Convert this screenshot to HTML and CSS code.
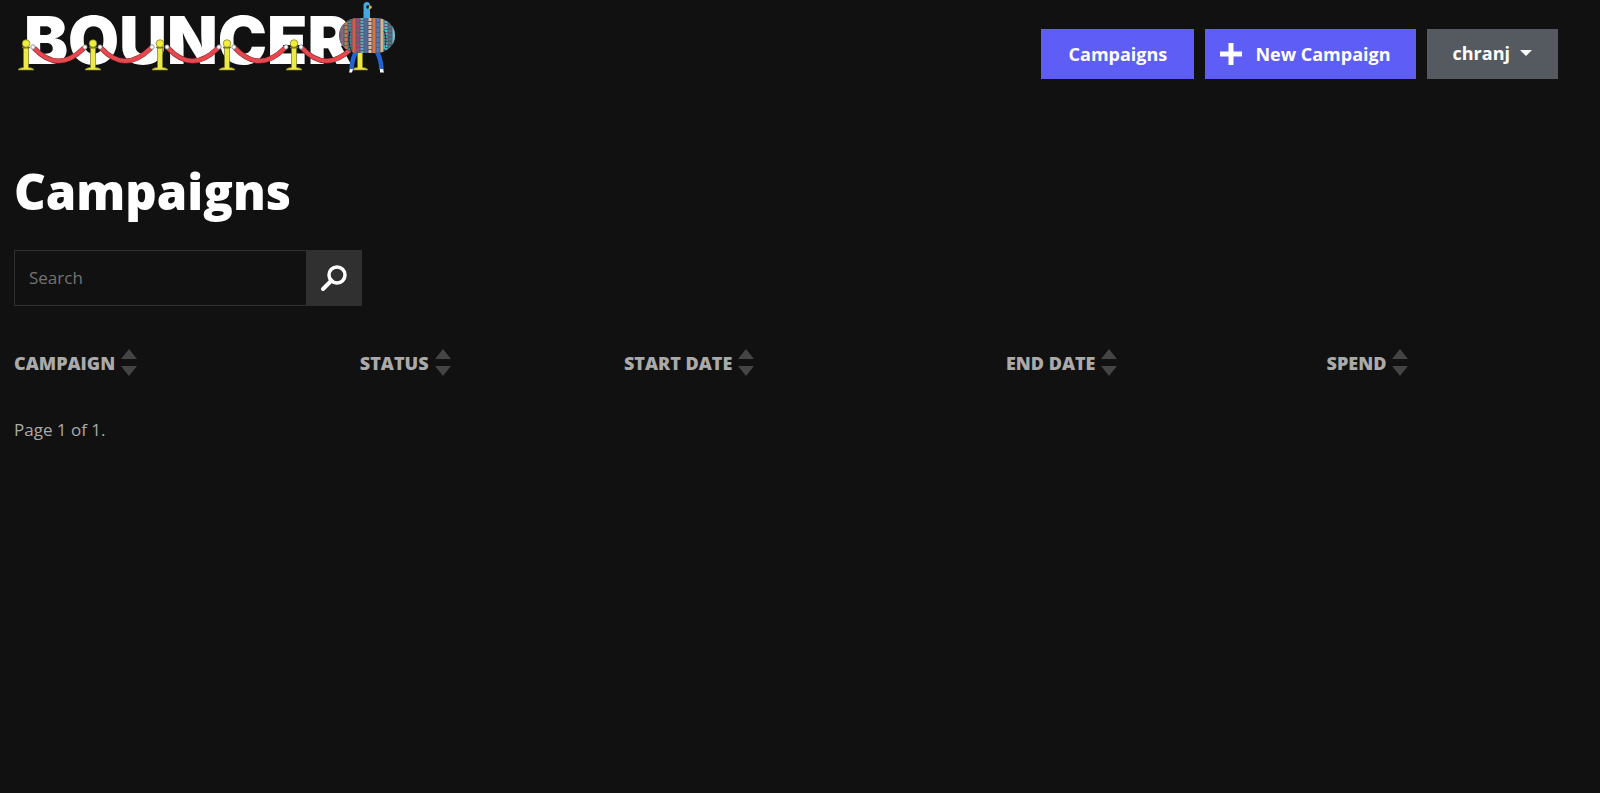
FILE: index.html
```html
<!DOCTYPE html>
<html lang="en">
<head>
<meta charset="utf-8">
<title>Bouncer – Campaigns</title>
<link rel="stylesheet" href="styles.css">
</head>
<body>
<svg class="defs" aria-hidden="true">
  <defs>
    <symbol id="sort" viewBox="0 0 16 28">
      <path d="M8 0 16 10H0ZM0 17H16L8 27Z" fill="currentColor"/>
    </symbol>
    <g id="post">
      <path d="M-8 70Q-8 68-2.500 67.500V48H2.500V67.500Q8 68 8 70Z" fill="#eeea45" stroke="#77752a" stroke-width=".7"/>
      <path d="M-4 47.500H4" stroke="#77752a" stroke-width="1.500"/>
      <circle cy="43.500" r="3.800" fill="#f1ed3c" stroke="#77752a" stroke-width=".7"/>
    </g>
    <g id="rope">
      <path d="M8 48Q32 74 58 48" fill="none" stroke="#7d2b30" stroke-width="5"/>
      <path d="M8 48Q32 74 58 48" fill="none" stroke="#e8474d" stroke-width="4"/>
      <circle cx="7" cy="47" r="2.200" fill="#fff" stroke="#666" stroke-width=".7"/>
      <circle cx="59" cy="47" r="2.200" fill="#fff" stroke="#666" stroke-width=".7"/>
    </g>
    <clipPath id="body"><rect x="339" y="18" width="56" height="35" rx="19" ry="17"/></clipPath>
  </defs>
</svg>
<header class="topbar">
  <a class="logo" href="#" aria-label="Bouncer">
    <svg width="400" height="80" viewBox="0 0 400 80">
      <text class="wordmark" x="24" y="64">BOUNCER</text>
      <use href="#rope" x="26"/><use href="#rope" x="93"/><use href="#rope" x="160"/><use href="#rope" x="227"/><use href="#rope" x="294"/>
      <use href="#post" x="26"/><use href="#post" x="93"/><use href="#post" x="160"/><use href="#post" x="227"/><use href="#post" x="294"/><use href="#post" x="360"/>
      <path d="M357 50Q352 58 351.500 70M376 50Q381 58 381.500 70" fill="none" stroke="#2164d8" stroke-width="4.500"/>
      <path d="M349 72.500 350 69H353L352 72.500ZM380 69H383L384 72.500H380Z" fill="#fff"/>
      <path d="M363.500 20V5Q364 2 367 2Q370 2 370 6V20Z" fill="#45a9dc"/>
      <circle cx="368" cy="7" r="1.800" fill="#111"/>
      <path d="M369 5.500Q372 5 372 7.500 371 9.500 368.500 9Z" fill="#c9b34c"/>
      <g clip-path="url(#body)">
        <path fill="#5c5a68" d="M339 18H395V53H339Z"/>
        <g fill="none" stroke-width="3">
          <path d="M342 18V53" stroke="#806a83"/><path d="M346 18V53" stroke="#c47c46" stroke-dasharray="3 1"/>
          <path d="M350 18V53" stroke="#3e8d99" stroke-dasharray="2 1"/><path d="M354 18V53" stroke="#d75a45"/>
          <path d="M358 18V53" stroke="#a34874" stroke-dasharray="4 1"/><path d="M362 18V53" stroke="#5ba9c9" stroke-dasharray="2 1"/>
          <path d="M366 18V53" stroke="#496ba0"/><path d="M370 18V53" stroke="#d8bda2" stroke-dasharray="3 1"/>
          <path d="M374 18V53" stroke="#df7338"/><path d="M378 18V53" stroke="#5579b8" stroke-dasharray="4 1"/>
          <path d="M382 18V53" stroke="#d8b68a"/><path d="M386 18V53" stroke="#51bfd1" stroke-dasharray="2 1"/>
          <path d="M390 18V53" stroke="#36829b" stroke-dasharray="2 2"/><path d="M394 18V53" stroke="#70bdcf"/>
        </g>
        <path d="M350 31Q347 41 352 53M384 31Q388 39 384 51" fill="none" stroke="#182736" stroke-width="1"/>
      </g>
      <path d="M385 45Q383 50 387 49" fill="none" stroke="#48b4bf" stroke-width="1.500"/>
    </svg>
  </a>
  <nav class="actions">
    <a class="button primary list" href="#">Campaigns</a>
    <a class="button primary create" href="#"><svg class="plus" width="22" height="22" viewBox="0 0 22 22" aria-hidden="true"><path d="M11 0V22M0 11H22" stroke="currentColor" stroke-width="5"/></svg>New Campaign</a>
    <button class="button account" type="button">chranj<svg class="caret" width="12" height="6" viewBox="0 0 12 6" aria-hidden="true"><path d="M0 0H12L6 6Z" fill="currentColor"/></svg></button>
  </nav>
</header>
<main>
  <h1>Campaigns</h1>
  <form class="search" role="search">
    <input type="search" placeholder="Search" aria-label="Search campaigns">
    <button type="submit" aria-label="Search"><svg width="28" height="28" viewBox="0 0 28 28" aria-hidden="true"><circle cx="17" cy="11" r="8" fill="none" stroke="currentColor" stroke-width="3.500"/><path d="M11.500 16.500 3 25" stroke="currentColor" stroke-width="4" stroke-linecap="round"/></svg></button>
  </form>
  <table>
    <thead>
      <tr>
        <th class="name" scope="col"><a href="#">CAMPAIGN<svg><use href="#sort"/></svg></a></th>
        <th class="status" scope="col"><a href="#">STATUS<svg><use href="#sort"/></svg></a></th>
        <th class="start" scope="col"><a href="#">START DATE<svg><use href="#sort"/></svg></a></th>
        <th class="end" scope="col"><a href="#">END DATE<svg><use href="#sort"/></svg></a></th>
        <th scope="col"><a href="#">SPEND<svg><use href="#sort"/></svg></a></th>
      </tr>
    </thead>
  </table>
  <p class="pages">Page 1 of 1.</p>
</main>
</body>
</html>
```
FILE: styles.css
```css
* { box-sizing: border-box; }
body {
  margin: 0;
  background: #111;
  color: #aaa;
  font: 17px/26px "Open Sans", "Noto Sans", sans-serif;
}
a { color: inherit; text-decoration: none; }
.defs { position: absolute; width: 0; height: 0; }
.topbar {
  display: flex;
  justify-content: space-between;
  align-items: flex-start;
  padding-right: 42px;
}
.logo svg { display: block; }
.wordmark { font: 900 66px Inter, sans-serif; fill: #fff; }
.actions { display: flex; gap: 11px; padding-top: 29px; }
.button {
  display: flex;
  align-items: center;
  justify-content: center;
  height: 50px;
  padding: 0 26px;
  border: 0;
  color: #fff;
  font: 700 18px/26px "Open Sans", sans-serif;
}
.primary { background: #5e5df5; }
.list { min-width: 153px; }
.create { padding: 0 25px 0 15px; }
.plus { margin-right: 13px; }
.account { background: #555a60; padding-bottom: 3px; }
.caret { margin-left: 10px; }
main { padding: 81px 14px 0; }
h1 {
  margin: 0 0 29px;
  color: #fff;
  font: 800 49px/60px "Open Sans", sans-serif;
}
.search { display: flex; width: 348px; height: 56px; border: 1px solid #303030; }
.search input {
  flex: 1;
  min-width: 0;
  padding: 0 14px;
  border: 0;
  background: transparent;
  color: #aaa;
  font: inherit;
}
.search input::placeholder { color: #737373; opacity: 1; }
.search button {
  display: grid;
  place-items: center;
  width: 55px;
  padding: 0;
  border: 0;
  background: #303030;
  color: #fff;
}
table { width: 100%; margin-top: 37px; border-collapse: collapse; table-layout: fixed; }
th { padding: 0; text-align: left; font: 800 18px/40px "Open Sans", sans-serif; }
th a { display: flex; align-items: center; }
th svg { width: 16px; height: 28px; margin-left: 6px; color: #444; }
.name { width: 22%; }
.status { width: 16.8%; }
.start { width: 24.3%; }
.end { width: 20.4%; }
.pages { margin: 34px 0 0; }
```
